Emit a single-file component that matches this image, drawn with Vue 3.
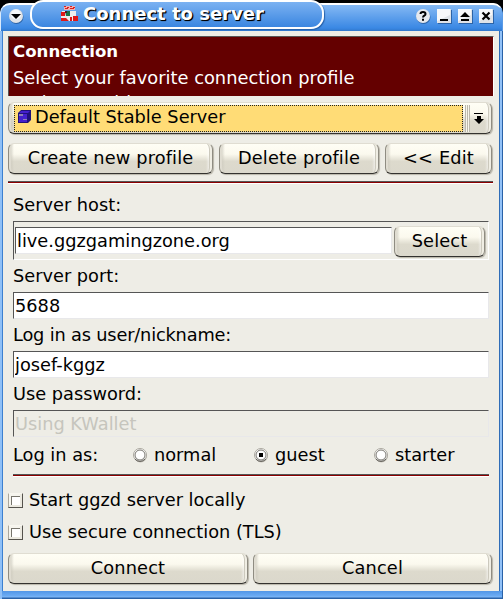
<script setup>
import { ref } from 'vue'
const host = ref('live.ggzgamingzone.org')
const port = ref('5688')
const nick = ref('josef-kggz')
const role = ref('guest')
const roles = ['normal', 'guest', 'starter']
const options = ['Start ggzd server locally', 'Use secure connection (TLS)']
</script>

<template>
  <div class="desktop">
    <div class="window">
      <header class="titlebar">
        <svg class="menu" width="16" height="17" viewBox="0 0 16 17">
          <circle cx="8.5" cy="9" r="7" fill="#2c64a8" />
          <circle cx="8" cy="8" r="7" fill="#dfe3e8" />
          <circle cx="8" cy="6.5" r="5" fill="#f7f8fa" />
          <path d="M3.5 6h9v1h-1v1h-1v1h-1v1h-1v1h-1v-1h-1v-1h-1v-1h-1v-1h-1z" fill="#000" />
        </svg>
        <div class="controls">
          <svg width="16" height="17" viewBox="0 0 16 17">
            <circle cx="8.5" cy="9" r="7" fill="#2c64a8" />
            <circle cx="8" cy="8" r="7" fill="#e6e9ee" />
            <path d="M5.5 6q0-2 2.5-2t2.500 2q0 1-1.200 1.700T8 9.500M7 11.800h2" fill="none" stroke="#000" stroke-width="2" />
          </svg>
          <svg width="16" height="17" viewBox="0 0 16 17">
            <path d="M2 2h14v14H2z" fill="#2c64a8" />
            <path d="M1 1h14v14H1z" fill="#dfe3e8" />
            <path d="M1 1h13v6L1 13z" fill="#f7f8fa" />
            <path d="M4 11h8v2H4z" fill="#000" />
          </svg>
          <svg width="16" height="17" viewBox="0 0 16 17">
            <path d="M2 2h14v14H2z" fill="#2c64a8" />
            <path d="M1 1h14v14H1z" fill="#dfe3e8" />
            <path d="M1 1h13v6L1 13z" fill="#f7f8fa" />
            <path d="M8 4l5 5H3zM4 11h8v2H4z" fill="#000" />
          </svg>
          <svg width="16" height="17" viewBox="0 0 16 17">
            <path d="M2 2h14v14H2z" fill="#2c64a8" />
            <path d="M1 1h14v14H1z" fill="#dfe3e8" />
            <path d="M1 1h13v6L1 13z" fill="#f7f8fa" />
            <path d="M4.500 4.500l7 7M11.500 4.500l-7 7" stroke="#000" stroke-width="2.200" />
          </svg>
        </div>
      </header>

      <main class="content">
        <section class="banner">
          <strong>Connection</strong>
          <p>Select your favorite connection profile</p>
          <p>and save with</p>
        </section>

        <div class="combo raised">
          <div class="choice">
            <svg width="14" height="14" viewBox="0 0 14 14">
              <path d="M3 0h10v10l-3 3H0V3z" fill="#20107a" />
              <path d="M3 1h9L10 3H1zM1 4h8v8H1z" fill="#4420cc" />
              <path d="M1 4h4v2H1zM5 9h4v1H5z" fill="#8b80b4" />
            </svg>
            <span>Default Stable Server</span>
          </div>
          <i class="grip"></i>
          <svg class="arrow" width="10" height="12" viewBox="0 0 10 12">
            <path d="M0 0h9v1H0zM3 3h4v3h3L5 11 0 6h3z" fill="#000" />
          </svg>
        </div>

        <div class="profile-actions">
          <button class="raised">Create new profile</button>
          <button class="raised">Delete profile</button>
          <button class="raised">&lt;&lt; Edit</button>
        </div>

        <hr class="rule">

        <form class="fields" @submit.prevent>
          <label>Server host:</label>
          <div class="host-row">
            <input v-model="host" class="field">
            <button class="raised">Select</button>
          </div>
          <label>Server port:</label>
          <input v-model="port" class="field">
          <label class="tight">Log in as user/nickname:</label>
          <input v-model="nick" class="field">
          <label>Use password:</label>
          <input class="field off" value="Using KWallet" disabled>
          <div class="roles">
            <span>Log in as:</span>
            <label v-for="r in roles" :key="r" class="role" @click="role = r">
              <svg width="16" height="16" viewBox="0 0 16 16">
                <circle cx="8.500" cy="9" r="6.500" fill="#c4c1b8" />
                <circle cx="8" cy="8" r="6.500" fill="#fff" stroke="#aaa79e" />
                <circle cx="8" cy="8" r="5" fill="#fff" stroke="#77756e" />
                <path d="M3 12a6.500 6.500 0 0 0 10 0" fill="none" stroke="#5c5a54" />
                <path v-if="role === r" d="M6 6h4v4H6z" fill="#000" />
              </svg>
              <span>{{ r }}</span>
            </label>
          </div>
        </form>
        <hr class="rule inner">

        <div class="options">
          <label v-for="o in options" :key="o" class="option"><i class="check"></i>{{ o }}</label>
        </div>

        <footer class="footer">
          <button class="raised">Connect</button>
          <button class="raised">Cancel</button>
        </footer>
      </main>
    </div>

    <div class="tab">
      <svg width="17" height="16" viewBox="0 0 17 16">
        <path d="M3 0h11v4H3z" fill="#f0b0b0" />
        <path d="M3 0h2v1H3zM6 1h2v1H6zM9 0h2v1H9zM12 1h2v1h-2zM4 2h3v1H4zM9 2h4v1H9z" fill="#d92020" />
        <path d="M1 5h14v5h2v5H0V6h1z" fill="#eee" />
        <path d="M0 6h4v4H0zM0 12h5l3 3H0zM9 11h2v4H9zM12 10h5v5h-5z" fill="#e01717" />
        <path d="M4 5h5v5H5z" fill="#18734a" />
        <path d="M4 5h2v2H4z" fill="#521c28" />
      </svg>
      <span>Connect to server</span>
    </div>
  </div>
</template>

<style>
body { margin: 0; background: #000; overflow: hidden; }
</style>

<style scoped>
* { box-sizing: border-box; }
.desktop {
  position: relative; width: 503px; height: 599px; padding-top: 3px; background: #000;
  font: 17.750px/22px "DejaVu Sans", sans-serif; color: #000;
}
.window {
  height: 596px; display: flex; flex-direction: column;
  background: linear-gradient(90deg, #8fc0f7 0 2px, #3c80d0 2px 3px, #eeede6 3px 499px, #2f6db8 499px 500px, #92c2f8 500px 502px, #2a62a8 502px);
  border-radius: 10px 10px 0 0; overflow: hidden;
}
.window::after {
  content: ""; height: 8px; flex: none; margin: 0 1px 0 2px;
  background: linear-gradient(#5296e6 0, #6cacf4 5px, #7db6f6 6px, #2a62a8 7px);
}
.titlebar {
  height: 28px; flex: none; display: flex; justify-content: space-between; align-items: flex-start;
  padding: 3px 7px 0 7px; border-top: 2px solid #fff; border-left: 1px solid #d9eafc;
  border-right: 1px solid #5a9ae6; border-radius: 10px 10px 0 0;
  background: linear-gradient(#85b9f4, #3a88e4 23px, #3178cc);
}
.controls { display: flex; gap: 5px; margin-right: 1px; }
.tab {
  position: absolute; left: 30px; top: 0; width: 294px; height: 29px;
  display: flex; align-items: center; gap: 5px; padding: 0 0 1px 29px;
  border: 2px solid #fff; border-radius: 13px;
  background: linear-gradient(#7bb2f2, #3b86e0);
  box-shadow: 1px 1px 1px #2760a8;
  color: #fff; font-size: 18px; font-weight: bold; text-shadow: 1px 1px 1px #000, 1px 1px 0 #000; white-space: nowrap;
}
.content { flex: 1; display: flex; flex-direction: column; padding: 5px 9px 0 8px; min-height: 0; }
.banner {
  height: 60px; width: 486px; overflow: hidden; padding: 4px 60px 0 4px; flex: none;
  border-top: 1px solid #555; border-left: 1px solid #555; border-right: 1px solid #fff;
  background: #640000; color: #fff;
}
.banner strong { display: block; font-size: 16.600px; height: 25px; }
.banner p { margin: 0 0 1px; line-height: 24px; font-size: 17.850px; }
.raised {
  appearance: none; font: inherit; letter-spacing: .15px; color: inherit; padding: 0; margin: 0;
  border: 1px solid #8f8c82; border-top-color: #e0ddd2; border-bottom-color: #33312e; border-radius: 6px;
  background: linear-gradient(90deg, #c9c6ba, transparent 5px calc(100% - 6px), #fff 100%) , linear-gradient(#fffef5, #fbf9ee 35%, #dddacd 60%, #dbd8cc);
  box-shadow: inset 5px 0 1px -3px #e0ddd2, inset -4px 0 0 -2px #f0eee4, inset -5px 0 0 -2px #ccc9bd, 1px 1px 1px #b8b5a9;
}
.combo { display: flex; align-items: center; height: 32px; margin-top: 6px; flex: none; width: 484px; }
.choice {
  width: 449px; height: 27px; margin-left: 5px; padding-left: 3px; border: 1px dotted #222;
  background: #ffdc76; display: flex; align-items: center; gap: 3px; letter-spacing: 0; padding-bottom: 2px;
}
.grip { width: 5px; height: 27px; margin-left: 2px; background: repeating-linear-gradient(90deg, #bbb8ac 0 1px, #f8f6ec 1px 2px); }
.arrow { margin-left: 4px; margin-top: 2px; }
.profile-actions { display: grid; grid-template-columns: 205px 160px 107px; gap: 6px; margin-top: 9px; height: 31px; flex: none; width: 484px; }
.profile-actions .raised { padding-bottom: 1px; }
.rule { flex: none; width: 485px; height: 3px; border: 0; margin: 7px 0 0; background: linear-gradient(#555 0 1px, #8b0000 1px 2px, #fff 2px); }
.rule.inner { width: 476px; margin: 8px 0 0 5px; }
.fields { display: flex; flex-direction: column; margin: 10px 0 0 5px; width: 476px; flex: none; }
.fields > label { height: 27px; }
.fields > .tight { letter-spacing: -.17px; }
.field {
  appearance: none; display: block; width: 100%; height: 27px; padding: 0 0 0 1px; outline: 0;
  border: 1px solid #e8e8ea; border-top-color: #555; border-left-color: #555; border-radius: 0;
  background: #fff; font: inherit; color: #000; margin-bottom: 5px;
}
.host-row {
  display: flex; height: 39px; margin: 0 0 5px; padding: 4px 3px 0 1px; gap: 2px;
  border: 1px solid #fff; border-top-color: #555; border-left-color: #555;
}
.host-row .field { flex: 1; min-width: 0; margin-top: 1px; }
.host-row .raised { width: 91px; height: 31px; padding-bottom: 2px; }
.field.off { background: #eeede6; color: #c6c5bd; margin-bottom: 7px; }
.roles { display: grid; grid-template-columns: 119px 121px 120px auto; height: 22px; }
.role { display: flex; align-items: center; gap: 6px; }
.options { display: flex; flex-direction: column; gap: 10px; margin-top: 12px; }
.option { display: flex; align-items: center; gap: 6px; height: 22px; }
.check {
  width: 15px; height: 15px; border: 1px solid #77756d; border-color: #f8f7f0 #55534d #55534d #aaa79d;
  background: #fff; box-shadow: inset -2px -2px 0 #ebe9e0, inset 2px 2px 0 #f6f5ee, inset 3px 3px 0 #77756d;
}
.footer { display: grid; grid-template-columns: 240px 239px; gap: 5px; height: 31px; margin-top: 10px; }
.footer .raised { padding-bottom: 2px; }
</style>
